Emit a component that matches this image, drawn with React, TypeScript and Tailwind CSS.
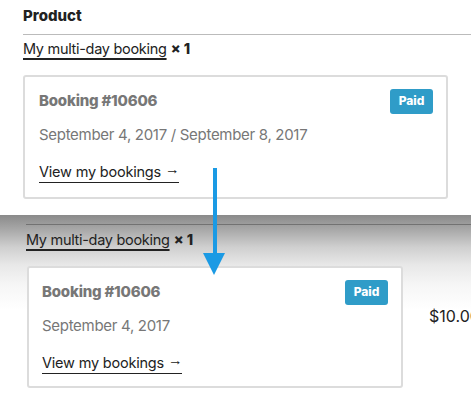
function BookingCard({ dates, wide }: { dates: string; wide?: boolean }) {
  return (
    <div
      className={`${wide ? "w-[425px] h-[124px] pl-[14px] pr-[13px]" : "w-[376px] h-[122px] pl-[13px] pr-[13px]"} shrink-0 border-2 border-[#dcdcdc] rounded-[3px] bg-white pt-[13px] flex flex-col`}
    >
      <div className="flex items-center justify-between h-[22px]">
        <span className="text-[15px] font-extrabold text-[#777] leading-5 tracking-[-0.2px]">Booking #10606</span>
        <span className="h-[25px] w-[43px] rounded-[3px] bg-[#2f9cc8] text-white text-[12px] font-extrabold flex items-center justify-center">
          Paid
        </span>
      </div>
      <div className="mt-[13px] text-[15px] text-[#777] leading-5 tracking-[-0.3px]">{dates}</div>
      <div className="mt-[16px] leading-5 h-5">
        <a className="inline-block text-[14.5px] leading-[19px] text-[#222] border-b-[1.5px] border-[#222] tracking-[-0.2px]">
          View my bookings <span className="relative -top-[3px] font-['Liberation_Sans',sans-serif]">→</span>
        </a>
      </div>
    </div>
  );
}

export default function App() {
  return (
    <div className="relative w-[471px] h-[402px] overflow-hidden bg-white font-['Inter',sans-serif] text-[#222]">
      {/* top screenshot */}
      <div className="h-[215px] bg-white">
        <div className="ml-[23px] pt-[6px] pb-[8px] border-b border-[#bbb]">
          <div className="text-[15px] font-extrabold leading-5 text-[#222]">Product</div>
        </div>
        <div className="ml-[23px] mt-[4px] leading-5 text-[14.5px]">
          <a className="underline underline-offset-[4px] decoration-[1.5px] tracking-[-0.3px]">My multi-day booking</a>{" "}
          <strong className="font-extrabold">× 1</strong>
        </div>
        <div className="ml-[23px] mt-[16px]">
          <BookingCard wide dates="September 4, 2017 / September 8, 2017" />
        </div>
      </div>

      {/* bottom screenshot */}
      <div className="h-[187px] bg-[linear-gradient(to_bottom,#8a8a8a_0px,#a9a9a9_15px,#cfcfcf_32px,#e8e8e8_50px,#f6f6f6_70px,#fff_95px)]">
        <div className="ml-[26px] pt-[9px] border-b border-[#727272]" />
        <div className="ml-[26px] mt-[5px] leading-5 text-[14.5px]">
          <a className="underline underline-offset-[4px] decoration-[1.5px] tracking-[-0.3px]">My multi-day booking</a>{" "}
          <strong className="font-extrabold">× 1</strong>
        </div>
        <div className="ml-[27px] mt-[16px] flex items-start gap-[26px]">
          <BookingCard dates="September 4, 2017" />
          <div className="mt-[40px] text-[16px] leading-5 whitespace-nowrap">$10.00</div>
        </div>
      </div>

      {/* arrow overlay */}
      <svg className="absolute left-[202px] top-[167px]" width="24" height="110" viewBox="0 0 24 110">
        <rect x="11" y="1" width="4" height="88" fill="#1b9ae4" />
        <polygon points="1,86 23,86 12,108" fill="#1b9ae4" />
      </svg>
    </div>
  );
}
